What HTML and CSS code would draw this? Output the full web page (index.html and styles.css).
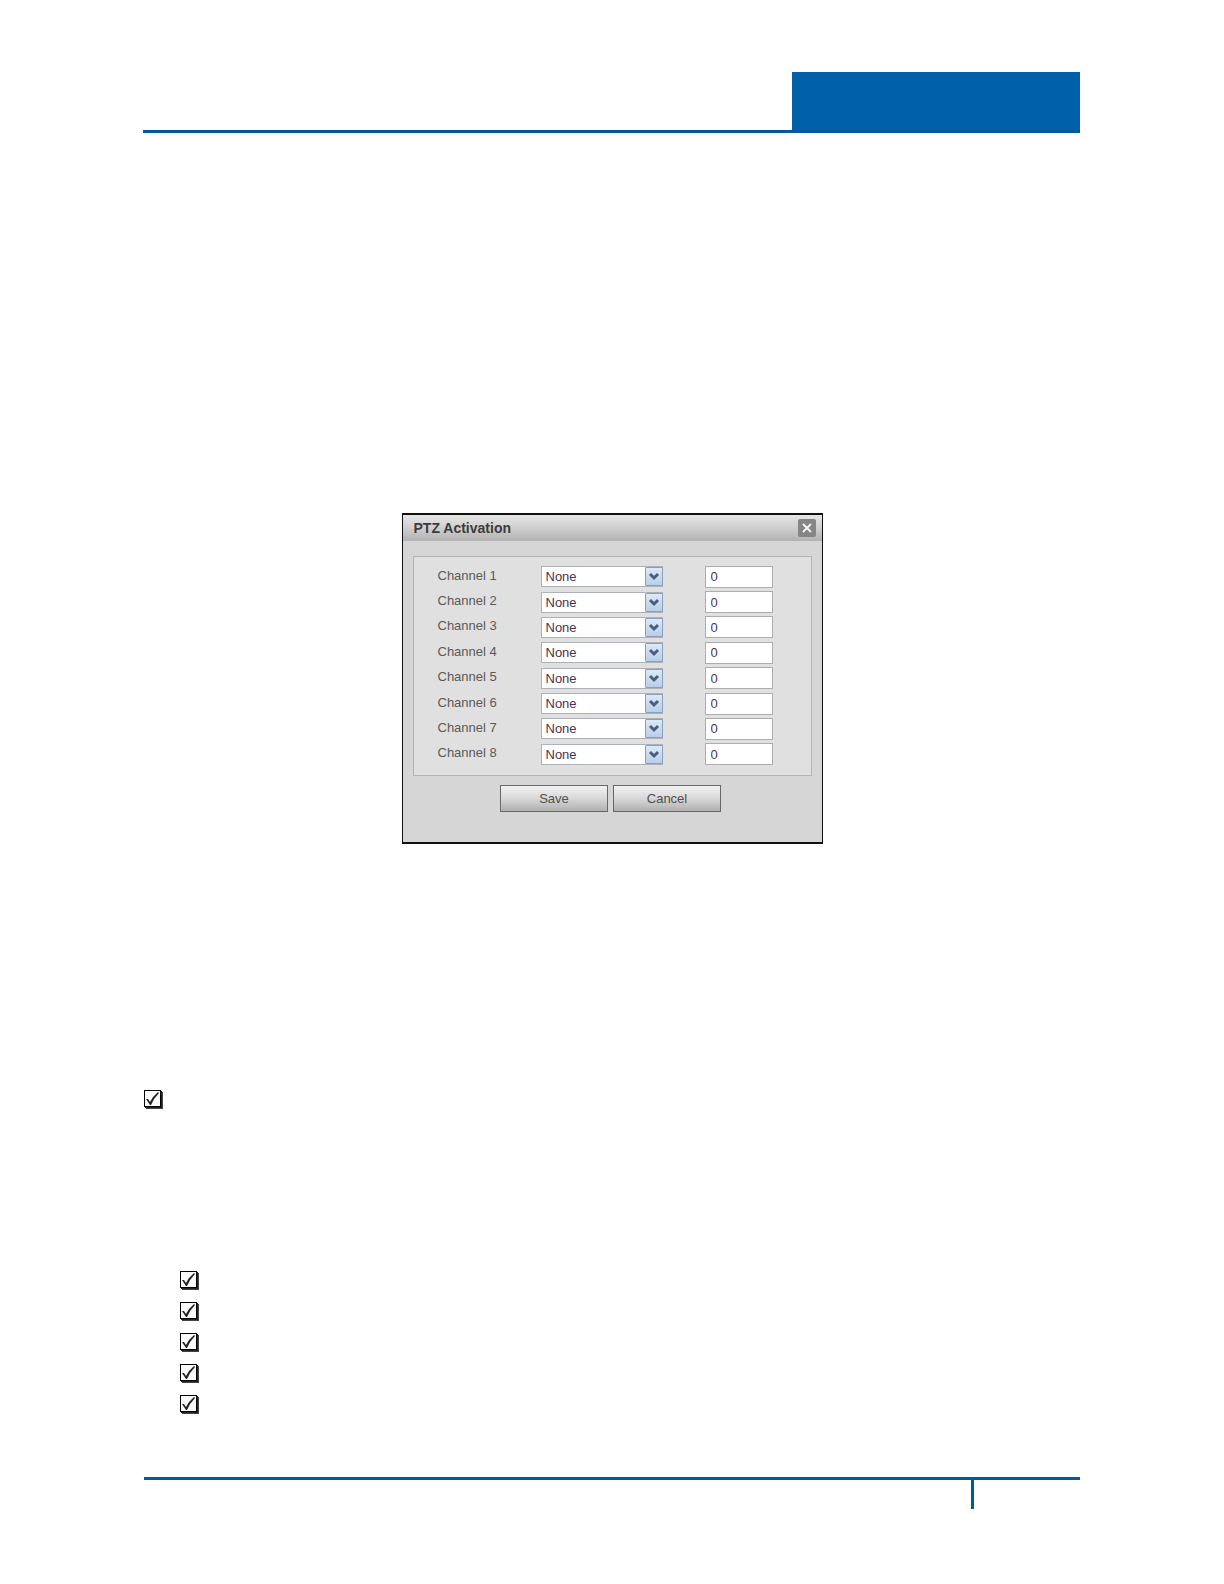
FILE: index.html
```html
<!DOCTYPE html>
<html lang="en">
<head>
  <meta charset="UTF-8">
  <title>PTZ Activation</title>
  <link rel="stylesheet" href="styles.css">
</head>
<body>
  <!-- shared icons -->
  <svg class="icons" aria-hidden="true">
    <symbol id="arrow" viewBox="0 0 16 17">
      <path d="M4 6 L8 10 L12 6" fill="none" stroke="#4b5f7d" stroke-width="3"/>
    </symbol>
    <symbol id="tick" viewBox="0 0 17 17">
      <path d="M2 9 L4 9 L6 12 Q9 6 14 2 L15 3 Q10 8 7 15 L6 15 Z" fill="#222"/>
    </symbol>
  </svg>

  <header class="page-header">
    <div class="header-block"></div>
  </header>

  <main>
    <form class="dialog">
      <div class="dialog-title">
        <h1>PTZ Activation</h1>
        <button type="button" class="close-btn" aria-label="Close">
          <svg width="18" height="18" viewBox="0 0 18 18"><path d="M5 5 L13 13 M13 5 L5 13" stroke="#f4f4f4" stroke-width="2"/></svg>
        </button>
      </div>

      <div class="channels" id="channels">
        <!-- channel rows go here -->
      </div>

      <div class="buttons">
        <button type="button">Save</button>
        <button type="button">Cancel</button>
      </div>
    </form>

    <label class="check"><input type="checkbox" checked aria-label="Step"><svg><use href="#tick"/></svg></label>

    <ul class="check-list">
      <li><label class="check"><input type="checkbox" checked aria-label="Item 1"><svg><use href="#tick"/></svg></label></li>
      <li><label class="check"><input type="checkbox" checked aria-label="Item 2"><svg><use href="#tick"/></svg></label></li>
      <li><label class="check"><input type="checkbox" checked aria-label="Item 3"><svg><use href="#tick"/></svg></label></li>
      <li><label class="check"><input type="checkbox" checked aria-label="Item 4"><svg><use href="#tick"/></svg></label></li>
      <li><label class="check"><input type="checkbox" checked aria-label="Item 5"><svg><use href="#tick"/></svg></label></li>
    </ul>
  </main>

  <footer class="page-footer">
    <div class="page-number"></div>
  </footer>

  <script>
    let rows = "";

    for (let i = 1; i <= 8; i++) {
      rows += `
        <div class="channel">
          <label for="type${i}">Channel ${i}</label>
          <span class="select">
            <select id="type${i}"><option>None</option></select>
            <svg><use href="#arrow"/></svg>
          </span>
          <input type="text" value="0" aria-label="Channel ${i} address">
        </div>`;
    }

    document.getElementById("channels").innerHTML = rows;
  </script>
</body>
</html>
```
FILE: styles.css
```css
* {
    box-sizing: border-box;
}

body {
    margin: 0;
    padding: 72px 144px 72px 143px;
    background-color: #fff;
    font-family: "Liberation Sans", Arial, sans-serif;
    font-size: 13px;
    color: #5a5a5a;
}

.icons {
    position: absolute;
    width: 0;
    height: 0;
}

/* Header */
.page-header {
    border-bottom: 3px solid #005a9e;
}

.header-block {
    width: 288px;
    height: 58px;
    margin-left: auto;
    background-color: #0060a9;
}

/* Dialog */
main {
    padding-left: 1px;
}

.dialog {
    width: 421px;
    margin: 380px auto 0;
    padding-bottom: 30px;
    border: 1px solid #111;
    border-width: 2px 1px;
    background-color: #d6d6d6;
}

.dialog-title {
    display: flex;
    align-items: center;
    justify-content: space-between;
    height: 26px;
    padding: 0 6px 0 11px;
    background-image: linear-gradient(#e6e6e6, #cfcfcf 50%, #b2b2b2);
}

h1 {
    margin: 0;
    font-size: 14px;
    color: #3c3c3c;
}

.close-btn {
    width: 18px;
    height: 18px;
    padding: 0;
    border: none;
    border-radius: 2px;
    background-color: #858585;
}

.close-btn svg {
    display: block;
}

.channels {
    display: grid;
    grid-auto-rows: 1fr;
    height: 220px;
    margin: 15px 10px 0;
    padding: 7px 38px 8px 24px;
    border: 1px solid #b4b4b4;
    background-color: #e0e0e0;
}

.channel {
    display: grid;
    grid-template-columns: 103px 122px 1fr;
    align-items: center;
}

.channel label {
    padding-bottom: 3px;
}

.channel input {
    width: 68px;
    height: 22px;
    margin-left: auto;
    padding: 0 5px;
    border: 1px solid #adadad;
    background-color: #fff;
    font: inherit;
    color: #4c3350;
}

.select {
    position: relative;
    height: 21px;
}

.select select {
    width: 100%;
    height: 21px;
    padding: 0 4px;
    appearance: none;
    border: 1px solid #adb2b8;
    border-radius: 0;
    background-color: #fff;
    font: inherit;
    color: #4c3350;
}

.select svg {
    position: absolute;
    top: 1px;
    right: 0;
    width: 18px;
    height: 19px;
    border: 1px solid #88a0bc;
    border-radius: 1px;
    background-image: linear-gradient(#dce9f8, #b9cee9);
    pointer-events: none;
}

.buttons {
    display: flex;
    justify-content: center;
    gap: 5px;
    margin-top: 9px;
    padding-right: 3px;
}

.buttons button {
    width: 108px;
    height: 27px;
    padding: 0;
    border: 1px solid #686868;
    background-image: linear-gradient(#f2f2f2, #d8d8d8 50%, #b0b0b0);
    font: inherit;
    color: #505050;
}

/* Tick boxes */
.check {
    display: block;
    position: relative;
    width: 17px;
    height: 17px;
}

.check input {
    display: block;
    width: 17px;
    height: 17px;
    margin: 0;
    appearance: none;
    border: 1px solid #000;
    background-color: #fafafa;
    box-shadow: 1px 1px 0 #222, 2px 2px 0 #444;
}

.check svg {
    position: absolute;
    top: 0;
    left: 0;
    width: 17px;
    height: 17px;
    pointer-events: none;
}

main > .check {
    margin-top: 246px;
}

.check-list {
    display: grid;
    gap: 14px;
    margin: 164px 0 0;
    padding: 0 0 0 36px;
    list-style: none;
}

/* Footer */
.page-footer {
    margin: 65px 0 0 1px;
    border-top: 3px solid #005a9e;
}

.page-number {
    width: 109px;
    height: 29px;
    margin-left: auto;
    border-left: 3px solid #005a9e;
}
```
